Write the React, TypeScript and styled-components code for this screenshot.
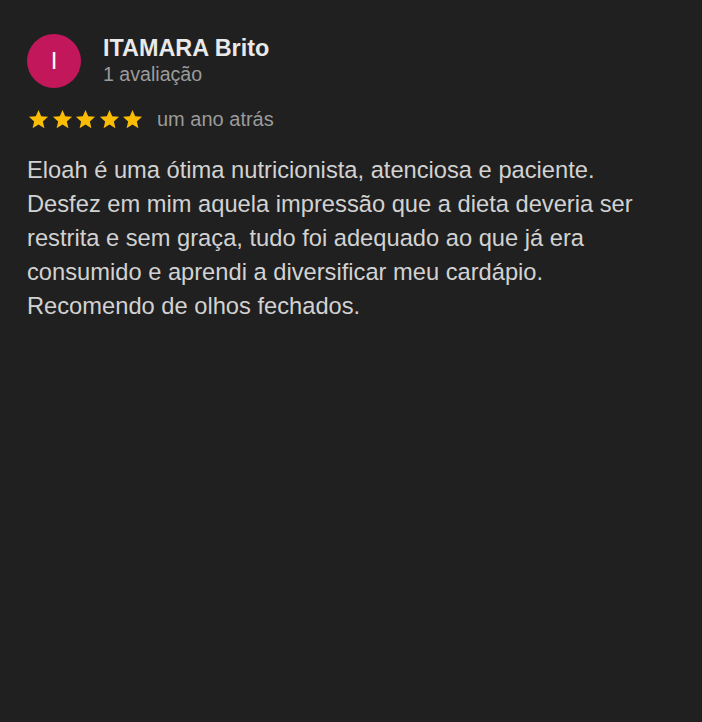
import styled, { createGlobalStyle } from "styled-components";

const GlobalStyle = createGlobalStyle`
    html, body {
        margin: 0;
        padding: 0;
        background: #202020;
    }
    body {
        font-family: "Liberation Sans", Arial, Helvetica, sans-serif;
    }
`;

const Page = styled.div`
    min-height: 722px;
    background: #202020;
    padding: 34px 35px 0 27px;
    box-sizing: border-box;
`;

const Header = styled.div`
    display: flex;
    align-items: flex-start;
    gap: 22px;
`;

const Avatar = styled.div`
    width: 54px;
    height: 54px;
    border-radius: 50%;
    background: #c2185b;
    color: #fff;
    display: flex;
    align-items: center;
    justify-content: center;
    font-size: 24px;
    flex-shrink: 0;
`;

const Author = styled.div`
    display: flex;
    flex-direction: column;
`;

const Name = styled.div`
    font-size: 23.4px;
    line-height: 28px;
    font-weight: 700;
    color: #e9e9e9;
`;

const Sub = styled.div`
    font-size: 19.6px;
    line-height: 24px;
    color: #9b9b9b;
`;

const RatingRow = styled.div`
    display: flex;
    align-items: center;
    margin-top: 20px;
    height: 22px;
`;

const Stars = styled.div`
    display: flex;
    gap: 0.5px;
    margin-right: 13px;
`;

const When = styled.span`
    font-size: 20px;
    color: #9b9b9b;
`;

const Body = styled.p`
    margin: 23px 0 0;
    max-width: 640px;
    font-size: 23.7px;
    line-height: 34px;
    color: #d2d2d2;
`;

function Star() {
    return (
        <svg width="23" height="23" viewBox="0 0 24 24">
            <path fill="#fbbc04" d="M12 17.27L18.18 21l-1.64-7.03L22 9.24l-7.19-.61L12 2 9.19 8.63 2 9.24l5.46 4.73L5.82 21z" />
        </svg>
    );
}

export default function App() {
    return (
        <>
            <GlobalStyle />
            <Page>
                <Header>
                    <Avatar>I</Avatar>
                    <Author>
                        <Name>ITAMARA Brito</Name>
                        <Sub>1 avaliação</Sub>
                    </Author>
                </Header>
                <RatingRow>
                    <Stars>
                        {[0, 1, 2, 3, 4].map((i) => <Star key={i} />)}
                    </Stars>
                    <When>um ano atrás</When>
                </RatingRow>
                <Body>
                    Eloah é uma ótima nutricionista, atenciosa e paciente. Desfez em mim aquela impressão que a dieta deveria ser restrita e sem graça, tudo foi adequado ao que já era consumido e aprendi a diversificar meu cardápio. Recomendo de olhos fechados.
                </Body>
            </Page>
        </>
    );
}
